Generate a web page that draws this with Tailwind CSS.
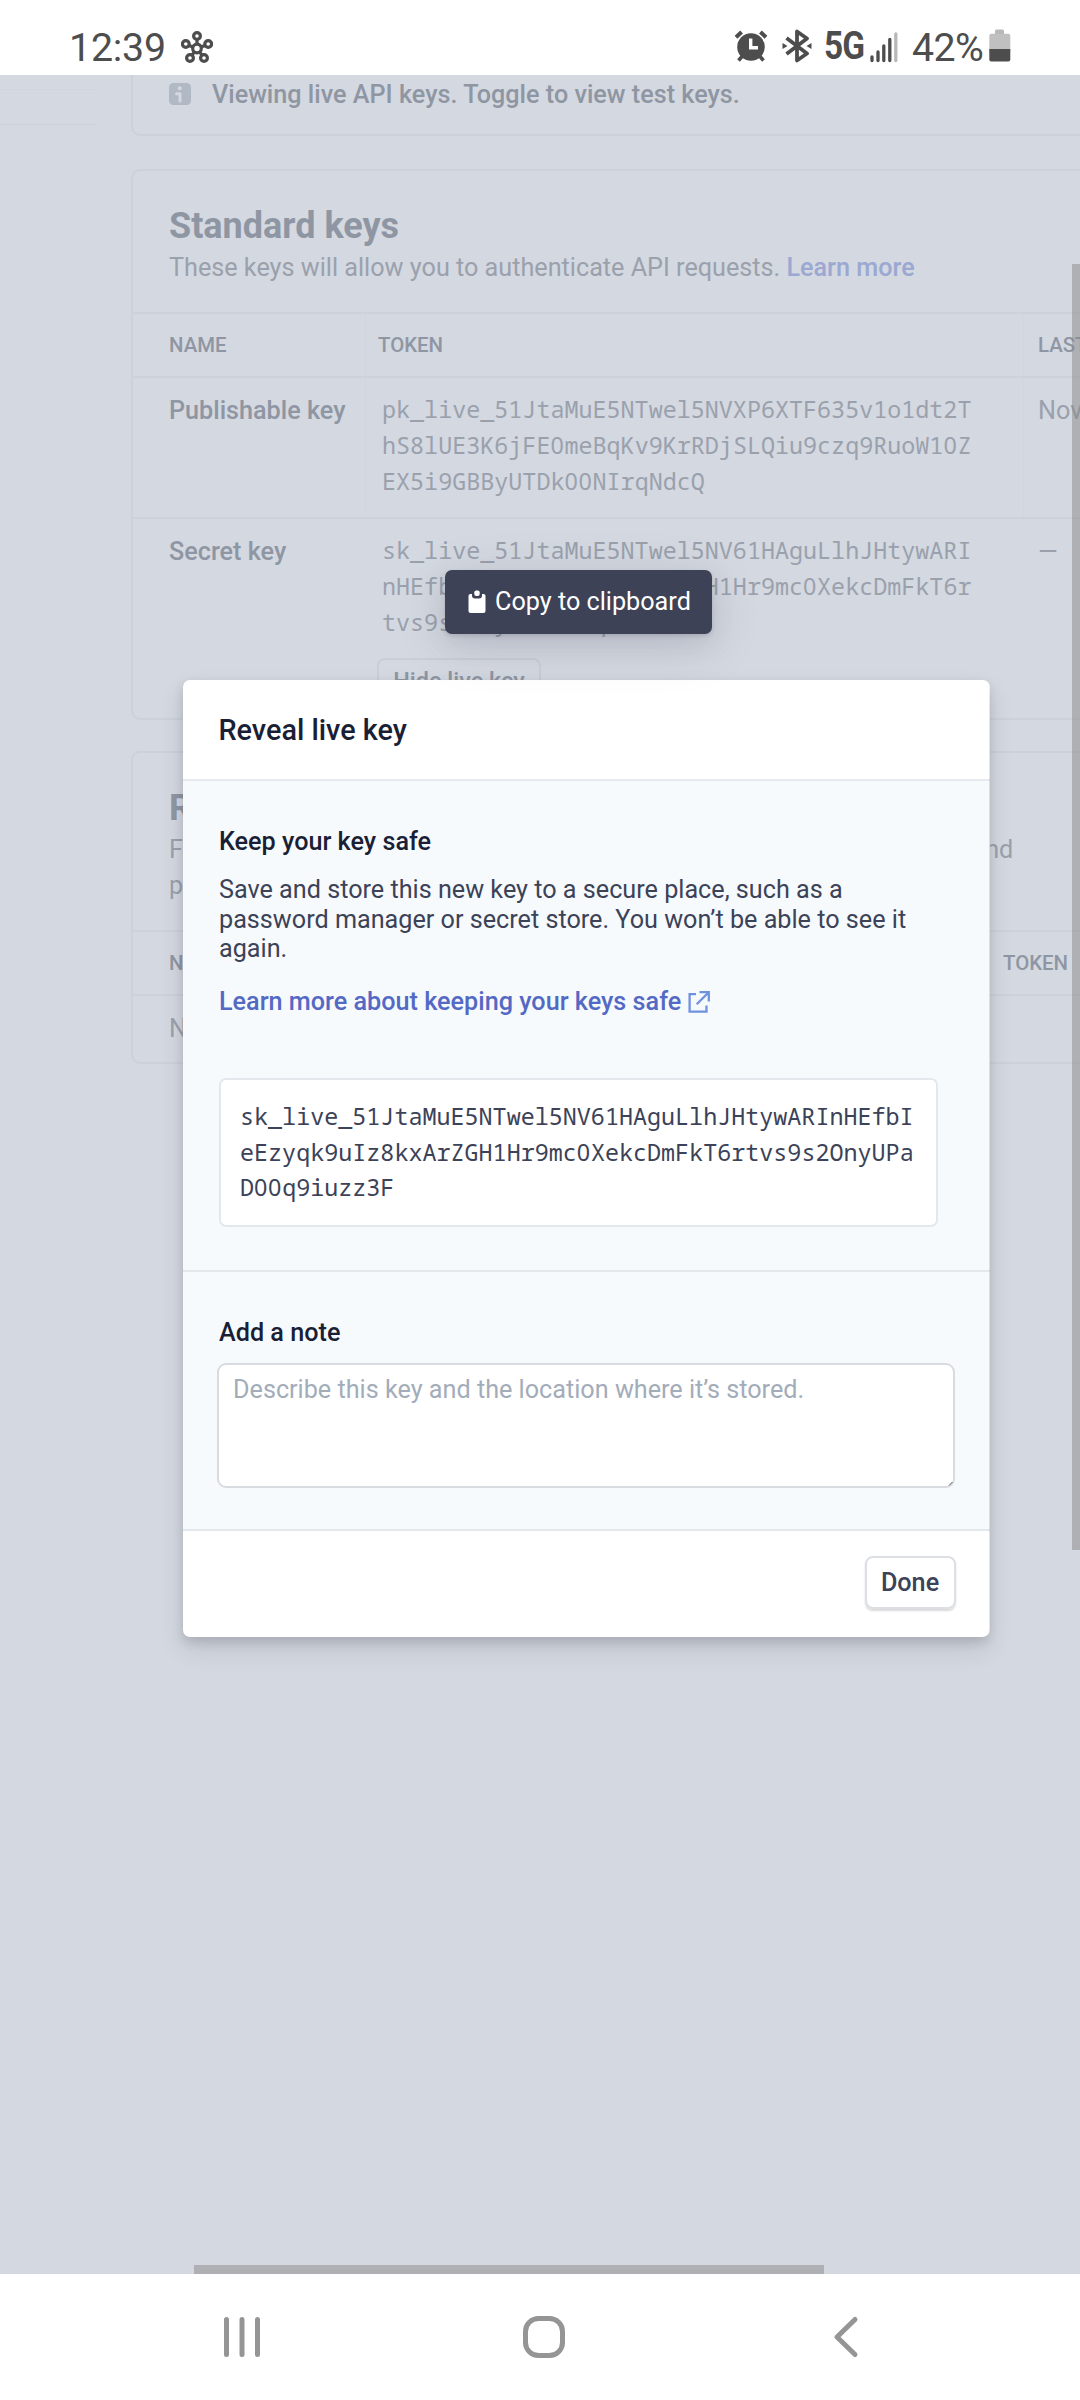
<!DOCTYPE html>
<html lang="en">
<head>
<meta charset="utf-8">
<title>API keys</title>
<script src="https://cdn.jsdelivr.net/npm/@tailwindcss/browser@4"></script>
</head>
<body class="w-[1080px] h-[2400px] overflow-hidden bg-white font-['Roboto',sans-serif] text-[25.2px] leading-[36px] flex flex-col">

<!-- status bar -->
<header class="h-[75px] shrink-0 flex items-start text-[#4d4d4d] pl-[69px] pr-[69px]">
  <span class="mt-[28px] w-[112px] text-[39.3px] leading-[40px] tracking-[-0.2px]">12:39</span>
  <svg class="mt-[31px] w-[32px] h-[32px]" viewBox="0 0 32 32" fill="none" stroke="#4d4d4d" stroke-width="3.2">
    <circle cx="16" cy="17.5" r="4.3"/><circle cx="16" cy="5" r="3.4"/><circle cx="4.8" cy="13" r="3.4"/><circle cx="27.2" cy="13" r="3.4"/><circle cx="9" cy="27" r="3.4"/><circle cx="23" cy="27" r="3.4"/>
    <path d="M16 8v5M8 14.4l4 1.6M24 14.4l-4 1.6M11 24l2.4-3M21 24l-2.4-3"/>
  </svg>
  <span class="flex-1"></span>
  <svg class="mt-[30px] w-[34px] h-[33px] mr-[14px]" viewBox="0 0 34 33">
    <path d="M2 7.2 7.6 2M32 7.2 26.4 2" stroke="#4d4d4d" stroke-width="4"/>
    <circle cx="17" cy="17" r="13.8" fill="#4d4d4d"/>
    <path d="M8.5 26l-4 4.500M25.500 26l4 4.500" stroke="#4d4d4d" stroke-width="3.600"/>
    <path d="M16.700 8.500v9.200h7.300" fill="none" stroke="#fff" stroke-width="3.400"/>
  </svg>
  <svg class="mt-[29px] w-[30px] h-[34px] mr-[12px]" viewBox="0 0 30 34">
    <path d="M4.500 9 25 24.500 15 31.500V2.500L25 9.500 4.500 25" fill="none" stroke="#4d4d4d" stroke-width="3.800" stroke-linejoin="round"/>
    <path d="M.500 14 5.500 17 .500 20zM29.500 14l-5 3 5 3z" fill="#4d4d4d"/>
  </svg>
  <span class="mt-[26px] w-[46px] text-[38px] leading-[40px] font-bold tracking-[-1px]"><span class="inline-block origin-left scale-x-[0.88]">5G</span></span>
  <svg class="mt-[32px] w-[28px] h-[31px] mr-[14px]" viewBox="0 0 28 31" stroke="#4d4d4d" stroke-width="3.300" stroke-linecap="round">
    <path d="M2 25v3.500M8 20v8.500M13.800 14v14.500M19.800 7.500v21"/><path d="M25.800 2v26.500" stroke="#b8b8b8"/>
  </svg>
  <span class="mt-[28px] w-[77px] text-[39.3px] leading-[40px] tracking-[-0.6px]">42%</span>
  <svg class="mt-[29px] w-[22px] h-[34px]" viewBox="0 0 22 34">
    <path d="M6 5V2q0-1.500 1.500-1.500h6q1.500 0 1.500 1.500v3z" fill="#b8b8b8"/><rect x=".300" y="4.700" width="21" height="20" rx="2" fill="#c0c0c0"/>
    <path d="M.300 20h21v10.500q0 2-2 2h-17q-2 0-2-2z" fill="#4d4d4d"/>
  </svg>
</header>

<main class="relative h-[2199px] shrink-0 overflow-hidden bg-[#d4d8e0]">
  <!-- dimmed dashboard -->
  <div class="flex w-[1400px] text-[#9aa1ad]">
    <div class="w-[97px] mr-[35px] shrink-0">
      <div class="h-[15px] border-b border-[#d0d4dc]"></div>
      <div class="h-[35px] border-b border-[#cbd0d8]"></div>
    </div>
    <div class="flex-1 flex flex-col -ml-px">
      <section class="h-[61px] border-l-2 border-b-2 border-[#ccd1da] rounded-bl-[9px] pl-[36px] pt-[2px] flex items-start font-medium text-[#8f96a3]">
        <svg class="mt-[6px] w-[22px] h-[22px] mr-[21px]" viewBox="0 0 22 22"><rect width="22" height="22" rx="4.500" fill="#b0b9c4"/><circle cx="10.800" cy="5.200" r="2" fill="#d4d8e0"/><path d="M7.500 10.700h3.500V18" fill="none" stroke="#d4d8e0" stroke-width="3" stroke-linecap="round" stroke-linejoin="round"/></svg>
        <span>Viewing live API keys. Toggle to view test keys.</span>
      </section>

      <section class="mt-[33px] border-2 border-[#ccd1da] rounded-[9px]">
        <div class="h-[143px] pt-[33px] pl-[36px] border-b-2 border-[#ccd1da]">
          <h2 class="text-[36px] leading-[44px] font-bold text-[#8f96a3]">Standard keys</h2>
          <p class="mt-[2px]">These keys will allow you to authenticate API requests. <a class="font-medium text-[#9ba8d2]">Learn more</a></p>
        </div>
        <div class="h-[64px] grid grid-cols-[232px_658px_1fr] border-b-2 border-[#ccd1da] text-[20.400px] leading-[62px] font-medium text-[#8f96a3]">
          <span class="pl-[36px]">NAME</span><span class="border-l border-[#d1d5dd] pl-[12px]">TOKEN</span><span class="border-l border-[#d1d5dd] pl-[14px]">LAST USED</span>
        </div>
        <div class="h-[141px] grid grid-cols-[232px_658px_1fr] border-b-2 border-[#ccd1da]">
          <span class="pt-[15px] pl-[36px] font-medium text-[#8f96a3]">Publishable key</span>
          <div class="border-l border-[#d1d5dd] pt-[13px] pl-[16px] font-['Noto_Sans_Mono','Droid_Sans_Mono','DejaVu_Sans_Mono',monospace] text-[23.4px]">pk_live_51JtaMuE5NTwel5NVXP6XTF635v1o1dt2T<br>hS8lUE3K6jFE<span class="font-['Noto_Sans'] tracking-[0.655px]">0</span>meBqKv9KrRDjSLQiu9czq9RuoW1<span class="font-['Noto_Sans'] tracking-[0.655px]">0</span>Z<br>EX5i9GBByUTDk<span class="font-['Noto_Sans'] tracking-[0.655px]">00</span>NIrqNdcQ</div>
          <span class="border-l border-[#d1d5dd] pt-[15px] pl-[14px]">Nov 8</span>
        </div>
        <div class="h-[199px] grid grid-cols-[232px_658px_1fr]">
          <span class="pt-[15px] pl-[36px] font-medium text-[#8f96a3]">Secret key</span>
          <div class="pt-[13px] pl-[12px]">
            <div class="pl-[5px] font-['Noto_Sans_Mono','Droid_Sans_Mono','DejaVu_Sans_Mono',monospace] text-[23.4px]">sk_live_51JtaMuE5NTwel5NV61HAguLlhJHtywARI<br>nHEfbIeEzyqk9uIz8kxArZGH1Hr9mc<span class="font-['Noto_Sans'] tracking-[0.655px]">0</span>XekcDmFkT6r<br>tvs9s2OnyUPaD<span class="font-['Noto_Sans'] tracking-[0.655px]">00</span>q9iuzz3F</div>
            <span class="mt-[18px] inline-block w-[164px] h-[50px] border-2 border-[#c9ced7] rounded-[8px] text-center font-medium text-[23.4px] leading-[43px] text-[#8f96a3]">Hide live key</span>
          </div>
          <span class="pt-[15px] pl-[15px]">—</span>
        </div>
      </section>

      <section class="mt-[31px] border-2 border-[#ccd1da] rounded-[9px]">
        <div class="h-[179px] pt-[33px] pl-[36px] border-b-2 border-[#ccd1da]">
          <h2 class="text-[36px] leading-[44px] font-bold text-[#8f96a3]">Restricted keys</h2>
          <p class="mt-[2px]">For greater security, you can create restricted API keys that limit access and<br>permissions for different areas of your account data.</p>
        </div>
        <div class="h-[64px] grid grid-cols-[870px_1fr] border-b-2 border-[#ccd1da] text-[20.400px] leading-[62px] font-medium text-[#8f96a3]">
          <span class="pl-[36px]">NAME</span><span>TOKEN</span>
        </div>
        <div class="h-[66px] pt-[15px] pl-[36px]">No restricted keys</div>
      </section>
    </div>
  </div>

  <!-- dialog -->
  <section class="absolute left-[183px] top-[605px] w-[806.5px] h-[957px] rounded-[7px] bg-white overflow-hidden text-[#3c4257]">
    <h1 class="h-[101px] border-b-2 border-[#e6eaee] pl-[35.500px] text-[28.8px] leading-[100px] font-medium text-[#1a1f36]">Reveal live key</h1>
    <div class="h-[491px] bg-[#f6fafd] border-b-2 border-[#e3e8ed] px-[36px] pt-[43px]">
      <h2 class="font-medium text-[#1a1f36]">Keep your key safe</h2>
      <p class="mt-[15px] leading-[29.7px]">Save and store this new key to a secure place, such as a<br>password manager or secret store. You won’t be able to see it<br>again.</p>
      <a class="mt-[20px] flex items-center font-medium text-[#5469c4]">Learn more about keeping your keys safe
        <svg class="ml-[7px] w-[22px] h-[22px]" viewBox="0 0 22 22" fill="none" stroke="#6f92e0" stroke-width="2.300"><path d="M8 3.200H1.600V20.600H18.500V14.500M11.500 1.200H20.800V10.500M20.500 1.500 8.700 13.300"/></svg>
      </a>
      <div class="mt-[58px] w-[719px] h-[149px] border-2 border-[#e3e8ee] rounded-[7px] bg-white pl-[19px] pt-[19px] leading-[35.4px] font-['Noto_Sans_Mono','Droid_Sans_Mono','DejaVu_Sans_Mono',monospace] text-[23.4px]">sk_live_51JtaMuE5NTwel5NV61HAguLlhJHtywARInHEfbI<br>eEzyqk9uIz8kxArZGH1Hr9mc<span class="font-['Noto_Sans'] tracking-[0.655px]">0</span>XekcDmFkT6rtvs9s2OnyUPa<br>D<span class="font-['Noto_Sans'] tracking-[0.655px]">00</span>q9iuzz3F</div>
    </div>
    <div class="h-[259px] bg-[#f6fafd] border-b-2 border-[#e3e8ed] px-[34px] pt-[43px]">
      <h2 class="pl-[2px] font-medium text-[#1a1f36]">Add a note</h2>
      <div class="relative mt-[12px] w-[738px] h-[125px] border-2 border-[#d8dce1] rounded-[9px] bg-white pl-[14px] pt-[7px] text-[#a3acb9]">Describe this key and the location where it’s stored.
        <svg class="absolute right-0 bottom-0 w-[5px] h-[5px]" viewBox="0 0 5 5"><path d="M1 4.500 4.500 1" stroke="#555" stroke-width="1"/></svg>
      </div>
    </div>
    <div class="flex justify-end pt-[25px] pr-[34px]">
      <button class="w-[91px] h-[53px] rounded-[8px] border-2 border-[#dcdfe4] shadow-[0_2px_2px_rgba(0,0,0,0.15)] font-medium leading-[46px]">Done</button>
    </div>
  </section>
  <div class="absolute left-[183px] top-[605px] w-[806px] h-[957px] rounded-[7px] shadow-[0_12px_25px_rgba(60,66,87,0.14),0_5px_11px_rgba(0,0,0,0.13)]"></div>

  <!-- tooltip -->
  <div class="absolute left-[445px] top-[495px] w-[267px] h-[64px] rounded-[7px] bg-[#3d4257] text-white flex items-center pl-[23px] shadow-[0_12px_54px_rgba(60,66,87,0.12),0_9px_27px_rgba(60,66,87,0.12),0_2px_4px_rgba(0,0,0,0.12)]">
    <svg class="w-[18px] h-[24px] mr-[9px]" viewBox="0 0 18 24"><rect x=".500" y="4" width="17" height="19" rx="2" fill="#fff"/><rect x="4" y="1" width="10" height="7.500" rx="3" fill="#3d4257"/><rect x="6.300" y=".500" width="5.400" height="5.500" rx="2" fill="#fff"/></svg>
    <span>Copy to clipboard</span>
  </div>

  <!-- scrollbars -->
  <div class="absolute left-[1072px] top-[189px] w-[8px] h-[1286px] bg-[#888]/50"></div>
  <div class="absolute left-[194px] top-[2190px] w-[630px] h-[9px] bg-[#888]/50"></div>
</main>

<!-- navigation bar -->
<nav class="flex-1 flex items-start pt-[41px] pl-[223px] text-[#959595]">
  <svg class="w-[38px] h-[44px]" viewBox="0 0 38 44" stroke="currentColor" stroke-width="5" stroke-linecap="round"><path d="M3.500 4.500v35M19 4.500v35M34.500 4.500v35"/></svg>
  <svg class="w-[44px] h-[44px] ml-[261px]" viewBox="0 0 44 44" fill="none" stroke="currentColor" stroke-width="5"><rect x="3.500" y="3.500" width="37" height="37" rx="13"/></svg>
  <svg class="w-[28px] h-[44px] ml-[266px]" viewBox="0 0 28 44" fill="none" stroke="currentColor" stroke-width="5" stroke-linecap="round" stroke-linejoin="round"><path d="M23 4.500 5 22 23 39.500"/></svg>
</nav>
</body>
</html>
